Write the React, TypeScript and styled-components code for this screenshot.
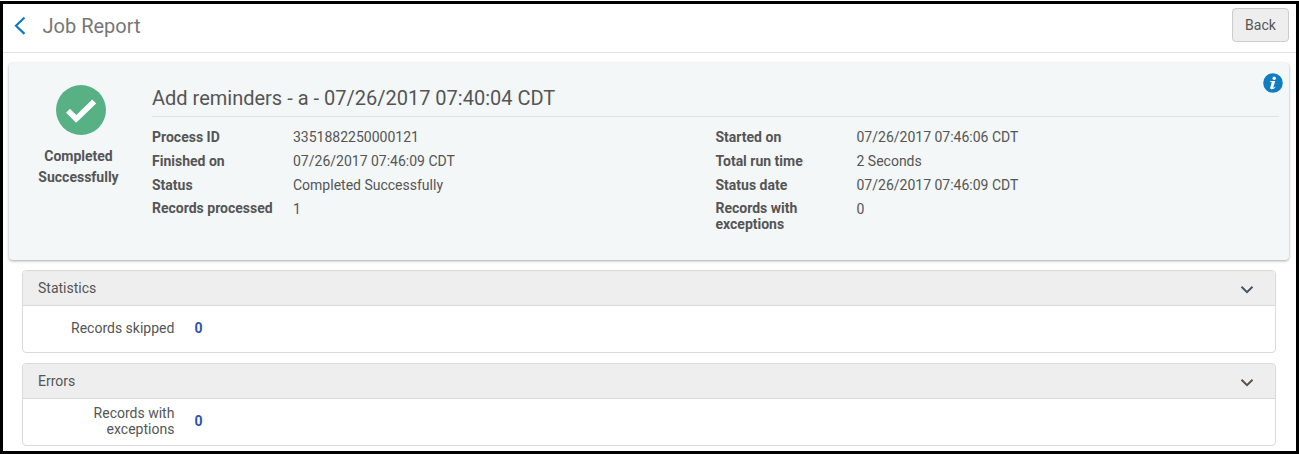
import React from "react";
import styled, { createGlobalStyle } from "styled-components";

const GlobalStyle = createGlobalStyle`
  *, *::before, *::after { box-sizing: border-box; }
  body {
    margin: 0;
    background: #fff;
    color: #555;
    font: 14px/16px Roboto, "Liberation Sans", sans-serif;
  }
`;

const Page = styled.div`
  height: 453px;
  margin-top: 1px;
  border: 3px solid #000;
  background: #fff;
  overflow: hidden;
`;

const Shell = styled.div`
  display: flow-root;
  height: 454px;
`;

const Header = styled.header`
  display: flex;
  align-items: flex-start;
  height: 49px;
  padding: 4px 7px 0 11px;
  border-bottom: 1px solid #e2e2e2;
`;

const BackArrow = styled.svg`
  width: 12px;
  height: 19px;
  margin: 8px 16.5px 0 0;
  flex: none;
`;

const PageTitle = styled.h1`
  flex: 1;
  margin: 5px 0 0;
  color: #777;
  font-size: 20px;
  line-height: 26px;
  font-weight: 400;
`;

const BackButton = styled.button`
  width: 57px;
  height: 34px;
  padding: 0;
  border: 1px solid #ccc;
  border-radius: 4px;
  background: #eee;
  color: #555;
  font: inherit;
`;

const Summary = styled.section`
  display: flex;
  height: 197px;
  margin: 10px 7px 0 6px;
  padding: 0 10px 0 0;
  border-radius: 4px;
  background: #f3f7f8;
  box-shadow: 0 1px 3px rgba(0, 0, 0, 0.35);
`;

const Outcome = styled.div`
  display: flex;
  flex-direction: column;
  align-items: center;
  width: 139px;
  margin-right: 4px;
  padding-top: 22px;
  text-align: center;
  font-weight: 700;
  line-height: 21px;
`;

const OutcomeIcon = styled.svg`
  width: 50px;
  height: 50px;
  margin: 0 0 11px 4px;
`;

const OutcomeText = styled.div`
  width: 90px;
`;

const Details = styled.div`
  flex: 1;
`;

const DetailsHeader = styled.div`
  display: flex;
  justify-content: space-between;
  height: 54px;
  border-bottom: 1px solid #e0e3e4;
`;

const JobTitle = styled.h2`
  margin: 22px 0 0;
  font-size: 20px;
  line-height: 26px;
  font-weight: 400;
`;

const InfoIcon = styled.svg`
  width: 20px;
  height: 20px;
  margin: 9.6px -3.6px 0 0;
`;

const Columns = styled.div`
  display: grid;
  grid-template-columns: 563.5px 1fr;
  padding-top: 8px;
`;

const Fields = styled.dl`
  display: grid;
  grid-template-columns: 141px 1fr;
  grid-auto-rows: 24px;
  margin: 0;
`;

const FieldLabel = styled.dt<{ $raised?: boolean; $narrow?: boolean }>`
  padding-top: ${(p) => (p.$raised ? 3 : 4)}px;
  padding-right: ${(p) => (p.$narrow ? 40 : 0)}px;
  font-weight: 700;
`;

const FieldValue = styled.dd`
  margin: 0;
  padding-top: 4px;
`;

const Panel = styled.section`
  height: 83px;
  margin: 10px 20px 0 19px;
  border: 1px solid #d9dadb;
  border-radius: 4px;
  overflow: hidden;
`;

const PanelHeader = styled.div`
  display: flex;
  justify-content: space-between;
  height: 35px;
  padding: 9px 21px 0 15px;
  border-bottom: 1px solid #d9dadb;
  background: #eee;
`;

const PanelBody = styled.div`
  display: flex;
  align-items: center;
  height: 44px;
`;

const StatLabel = styled.div`
  width: 151.4px;
  padding-left: 40px;
  text-align: right;
`;

const StatValue = styled.div`
  margin-left: 20px;
  color: #2a56a8;
  font-weight: 700;
`;

const Chevron = styled.svg`
  width: 14px;
  height: 10px;
  margin-top: 5px;
`;

type Row = [label: string, value: string];

const leftRows: Row[] = [
  ["Process ID", "3351882250000121"],
  ["Finished on", "07/26/2017 07:46:09 CDT"],
  ["Status", "Completed Successfully"],
  ["Records processed", "1"],
];

const rightRows: Row[] = [
  ["Started on", "07/26/2017 07:46:06 CDT"],
  ["Total run time", "2 Seconds"],
  ["Status date", "07/26/2017 07:46:09 CDT"],
  ["Records with exceptions", "0"],
];

function FieldList({ rows }: { rows: Row[] }) {
  return (
    <Fields>
      {rows.map(([label, value], i) => (
        <React.Fragment key={label}>
          <FieldLabel $raised={i === 3} $narrow={label.length > 20}>{label}</FieldLabel>
          <FieldValue>{value}</FieldValue>
        </React.Fragment>
      ))}
    </Fields>
  );
}

type StatPanelProps = { title: string; label: string; value: string; chevron: string };

function StatPanel({ title, label, value, chevron }: StatPanelProps) {
  return (
    <Panel>
      <PanelHeader>
        {title}
        <Chevron viewBox="0 0 14 10">
          <path d="M1.5 1.8 7 7.2 12.5 1.8" fill="none" stroke={chevron} strokeWidth="2" />
        </Chevron>
      </PanelHeader>
      <PanelBody>
        <StatLabel>{label}</StatLabel>
        <StatValue>{value}</StatValue>
      </PanelBody>
    </Panel>
  );
}

export default function App() {
  return (
    <Shell>
      <GlobalStyle />
      <Page>
        <Header>
          <BackArrow viewBox="0 0 12 19">
            <path d="M10.5 1.5 2 9.7l8.5 8.2" fill="none" stroke="#117dc0" strokeWidth="2.2" />
          </BackArrow>
          <PageTitle>Job Report</PageTitle>
          <BackButton type="button">Back</BackButton>
        </Header>
        <Summary>
          <Outcome>
            <OutcomeIcon viewBox="0 0 50 50">
              <circle cx="25" cy="25" r="25" fill="#58b085" />
              <path d="M12 25.8 20.2 34 38.2 16.5" fill="none" stroke="#fff" strokeWidth="5.5" />
            </OutcomeIcon>
            <OutcomeText>Completed Successfully</OutcomeText>
          </Outcome>
          <Details>
            <DetailsHeader>
              <JobTitle>Add reminders - a - 07/26/2017 07:40:04 CDT</JobTitle>
              <InfoIcon viewBox="0 0 20 20">
                <circle cx="10" cy="10" r="9.8" fill="#117dc0" />
                <circle cx="11.2" cy="5.2" r="1.7" fill="#fff" />
                <path d="M7 8h5.2l-1.8 6.2c-.2.8.6.6 1.7-.5l.5.4c-2.2 2.9-6 2.8-5.3.3l1.3-4.7c.1-.7-.4-.9-1.6-.9z" fill="#fff" />
              </InfoIcon>
            </DetailsHeader>
            <Columns>
              <FieldList rows={leftRows} />
              <FieldList rows={rightRows} />
            </Columns>
          </Details>
        </Summary>
        <StatPanel title="Statistics" label="Records skipped" value="0" chevron="#435468" />
        <StatPanel title="Errors" label="Records with exceptions" value="0" chevron="#5a5048" />
      </Page>
    </Shell>
  );
}
